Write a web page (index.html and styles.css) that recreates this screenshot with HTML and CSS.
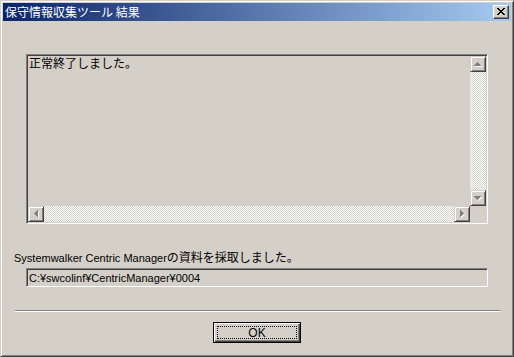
FILE: index.html
```html
<!DOCTYPE html>
<html>
<head>
	<title>保守情報収集ツール 結果</title>
	<link rel="stylesheet" href="styles.css">
</head>
<body>
	<div class="window">
		<div class="titlebar">
			<span class="title">保守情報収集ツール 結果</span>
			<div class="close-btn">
				<svg width="8" height="7" viewBox="0 0 8 7">
					<path d="M0 0h2v1H0zM6 0h2v1H6zM1 1h2v1H1zM5 1h2v1H5zM2 2h4v1H2zM3 3h2v1H3zM2 4h4v1H2zM1 5h2v1H1zM5 5h2v1H5zM0 6h2v1H0zM6 6h2v1H6z" fill="#000"/>
				</svg>
			</div>
		</div>

		<div class="content">
			<div class="editbox">
				<div class="edit-text">正常終了しました。</div>
				<div class="vscroll">
					<div class="sbtn">
						<svg width="8" height="5" viewBox="0 0 8 5">
							<path d="M4 1h1v1H4zM3 2h3v1H3zM2 3h5v1H2zM1 4h7v1H1z" fill="#fff"/>
							<path d="M3 0h1v1H3zM2 1h3v1H2zM1 2h5v1H1zM0 3h7v1H0z" fill="#808080"/>
						</svg>
					</div>
					<div class="track"></div>
					<div class="sbtn">
						<svg width="8" height="5" viewBox="0 0 8 5">
							<path d="M1 1h7v1H1zM2 2h5v1H2zM3 3h3v1H3zM4 4h1v1H4z" fill="#fff"/>
							<path d="M0 0h7v1H0zM1 1h5v1H1zM2 2h3v1H2zM3 3h1v1H3z" fill="#808080"/>
						</svg>
					</div>
				</div>
				<div class="hscroll">
					<div class="sbtn">
						<svg width="5" height="8" viewBox="0 0 5 8">
							<path d="M1 4h1v1H1zM2 3h1v3H2zM3 2h1v5H3zM4 1h1v7H4z" fill="#fff"/>
							<path d="M0 3h1v1H0zM1 2h1v3H1zM2 1h1v5H2zM3 0h1v7H3z" fill="#808080"/>
						</svg>
					</div>
					<div class="track"></div>
					<div class="sbtn">
						<svg width="5" height="8" viewBox="0 0 5 8">
							<path d="M1 1h1v7H1zM2 2h1v5H2zM3 3h1v3H3zM4 4h1v1H4z" fill="#fff"/>
							<path d="M0 0h1v7H0zM1 1h1v5H1zM2 2h1v3H2zM3 3h1v1H3z" fill="#808080"/>
						</svg>
					</div>
				</div>
				<div class="corner"></div>
			</div>

			<div class="label"><span class="latin">Systemwalker Centric Manager</span>の資料を採取しました。</div>
			<div class="pathfield">C:¥swcolinf¥CentricManager¥0004</div>

			<div class="separator"></div>

			<div class="buttons">
				<div class="ok-btn"><span class="focus">OK</span></div>
			</div>
		</div>
	</div>
</body>
</html>
```

FILE: styles.css
```css
body {
	margin: 0;
	background-color: #d4d0c8;
	font-family: "Liberation Sans", "Noto Sans CJK JP", sans-serif;
	font-size: 12px;
}

.window {
	width: 514px;
	height: 357px;
	box-sizing: border-box;
	padding: 2px;
	border: 1px solid;
	border-color: #d4d0c8 #404040 #404040 #d4d0c8;
	box-shadow: inset 1px 1px #fff, inset -1px -1px #808080;
	background-color: #d4d0c8;
	overflow: hidden;
}

.titlebar {
	height: 18px;
	display: flex;
	align-items: center;
	justify-content: space-between;
	padding: 0 2px 0 2px;
	background: linear-gradient(to right, #0a246a, #a6caf0);
	color: #fff;
}

.title {
	font-family: "Noto Sans CJK JP", sans-serif;
	font-size: 12px;
	line-height: 14px;
}

.close-btn {
	width: 16px;
	height: 14px;
	box-sizing: border-box;
	border: 1px solid;
	border-color: #fff #404040 #404040 #fff;
	box-shadow: inset -1px -1px #808080;
	background-color: #d4d0c8;
	display: flex;
	align-items: center;
	justify-content: center;
	padding: 0 1px 1px 0;
}

.close-btn svg {
	display: block;
}

.content {
	display: flex;
	flex-direction: column;
	padding: 33px 0 0 0;
}

.editbox {
	width: 462px;
	height: 170px;
	margin-left: 23px;
	box-sizing: border-box;
	border: 1px solid;
	border-color: #808080 #fff #fff #808080;
	box-shadow: inset 1px 1px #404040, inset -1px -1px #d4d0c8;
	padding: 1px;
	background-color: #d4d0c8;
	display: grid;
	grid-template-columns: 1fr 16px;
	grid-template-rows: 1fr 16px;
}

.edit-text {
	font-family: "Noto Sans CJK JP", sans-serif;
	line-height: 14px;
	padding: 0 1px;
	color: #000;
}

.vscroll {
	display: flex;
	flex-direction: column;
}

.hscroll {
	display: flex;
}

.track {
	flex: 1;
	background: repeating-conic-gradient(#fff 0 25%, #d4d0c8 0 50%) 0 0 / 2px 2px;
}

.sbtn {
	width: 16px;
	height: 16px;
	box-sizing: border-box;
	border: 1px solid;
	border-color: #d4d0c8 #404040 #404040 #d4d0c8;
	box-shadow: inset 1px 1px #fff, inset -1px -1px #808080;
	background-color: #d4d0c8;
	display: flex;
	align-items: center;
	justify-content: center;
}

.sbtn svg {
	display: block;
}

.corner {
	background-color: #d4d0c8;
}

.label {
	margin: 27px 0 0 11px;
	line-height: 14px;
	color: #000;
}

.latin {
	font-size: 11px;
}

.pathfield {
	width: 462px;
	height: 19px;
	margin: 3px 0 0 23px;
	box-sizing: border-box;
	border: 1px solid;
	border-color: #808080 #fff #fff #808080;
	box-shadow: inset 1px 1px #404040, inset -1px -1px #d4d0c8;
	padding: 2px 2px 0 2px;
	font-size: 11px;
	line-height: 14px;
	color: #000;
}

.separator {
	height: 1px;
	margin: 23px 11px 0 12px;
	background-color: #808080;
	border-bottom: 1px solid #fff;
}

.buttons {
	display: flex;
	justify-content: center;
	padding-top: 10px;
}

.ok-btn {
	width: 88px;
	height: 21px;
	box-sizing: border-box;
	border: 1px solid #000;
	box-shadow: inset 1px 1px #fff, inset -1px -1px #404040, inset -2px -2px #808080;
	padding: 3px;
	display: flex;
}

.focus {
	flex: 1;
	border: 1px dotted #000;
	display: flex;
	align-items: center;
	justify-content: center;
	line-height: 12px;
	color: #000;
}
```
